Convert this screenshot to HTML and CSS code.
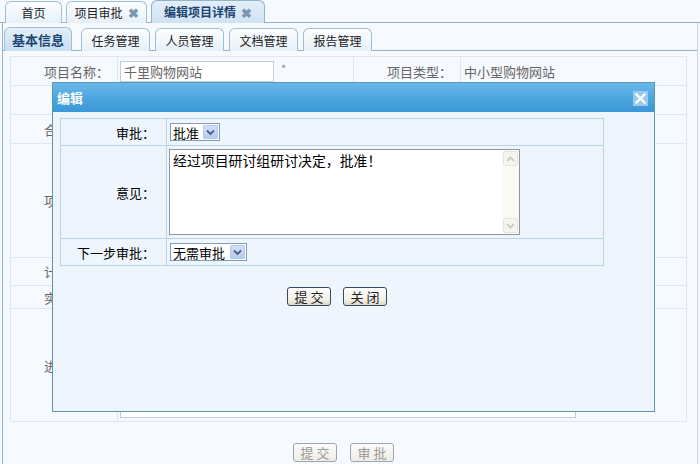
FILE: index.html
```html
<!DOCTYPE html>
<html lang="zh">
<head>
<meta charset="utf-8">
<title>编辑项目详情</title>
<link rel="stylesheet" href="styles.css">
</head>
<body>
<div class="page">
  <div class="tabs1">
    <div class="tab t-home">首页</div>
    <div class="tab t-audit">项目审批 <span class="x">✖</span></div>
    <div class="tab t-edit active">编辑项目详情 <span class="x">✖</span></div>
  </div>
  <div class="panel">
    <div class="tabs2">
      <div class="tab2 active">基本信息</div>
      <div class="tab2">任务管理</div>
      <div class="tab2">人员管理</div>
      <div class="tab2">文档管理</div>
      <div class="tab2">报告管理</div>
    </div>
    <div class="formwrap">
      <table class="form">
        <colgroup><col class="c1"><col class="c2"><col class="c3"><col class="c4"></colgroup>
        <tr class="r1">
          <td class="lbl">项目名称：</td>
          <td><span class="inp">千里购物网站</span><span class="star">*</span></td>
          <td class="lbl">项目类型：</td>
          <td class="val">中小型购物网站</td>
        </tr>
        <tr class="r2">
          <td class="lbl"></td><td></td><td class="lbl"></td><td></td>
        </tr>
        <tr class="r3">
          <td class="lbl">合同金额：</td><td></td><td class="lbl">项目状态：</td><td></td>
        </tr>
        <tr class="r4">
          <td class="lbl">项目描述：</td><td colspan="3"></td>
        </tr>
        <tr class="r5">
          <td class="lbl">计划时间：</td><td colspan="3"></td>
        </tr>
        <tr class="r6">
          <td class="lbl">实际时间：</td><td colspan="3"></td>
        </tr>
        <tr class="r7">
          <td class="lbl">进度说明：</td><td colspan="3" class="bottomcell"><div class="bigarea"></div></td>
        </tr>
      </table>
      <div class="actions">
        <span class="btn disabled">提 交</span>
        <span class="btn disabled">审 批</span>
      </div>
    </div>
  </div>

  <div class="dialog">
    <div class="dtitle">
      <span class="dname">编辑</span>
      <span class="dclose"><svg width="11" height="11" viewBox="0 0 11 11"><path d="M1.5 1.5 L9.5 9.5 M9.5 1.5 L1.5 9.5" stroke="#fff" stroke-width="2.4" stroke-linecap="square"/></svg></span>
    </div>
    <div class="dbody">
      <table class="dtable">
        <colgroup><col class="dc1"><col class="dc2"></colgroup>
        <tr class="dr1">
          <td class="dl">审批：</td>
          <td><span class="sel s1">批准<span class="arr"><svg width="9" height="7" viewBox="0 0 9 7"><path d="M1 1.5 L4.5 5 L8 1.5" fill="none" stroke="#4d6185" stroke-width="1.8"/></svg></span></span></td>
        </tr>
        <tr class="dr2">
          <td class="dl">意见：</td>
          <td>
            <div class="ta">
              <div class="tatext">经过项目研讨组研讨决定，批准！</div>
              <div class="sb">
                <span class="sbb"><svg width="9" height="6" viewBox="0 0 9 6"><path d="M1 5 L4.5 1.5 L8 5" fill="none" stroke="#c9c7ba" stroke-width="1.6"/></svg></span>
                <span class="sbb"><svg width="9" height="6" viewBox="0 0 9 6"><path d="M1 1 L4.5 4.5 L8 1" fill="none" stroke="#c9c7ba" stroke-width="1.6"/></svg></span>
              </div>
            </div>
          </td>
        </tr>
        <tr class="dr3">
          <td class="dl">下一步审批：</td>
          <td><span class="sel s2">无需审批<span class="arr"><svg width="9" height="7" viewBox="0 0 9 7"><path d="M1 1.5 L4.5 5 L8 1.5" fill="none" stroke="#4d6185" stroke-width="1.8"/></svg></span></span></td>
        </tr>
      </table>
      <div class="dactions">
        <span class="btn">提 交</span>
        <span class="btn">关 闭</span>
      </div>
    </div>
  </div>
</div>
</body>
</html>
```

FILE: styles.css
```css
* { box-sizing: border-box; }
html, body { margin: 0; padding: 0; }
body {
  width: 700px;
  height: 464px;
  overflow: hidden;
  background: #f6f9fd;
  font-family: "Noto Sans CJK SC", "Liberation Sans", sans-serif;
  font-size: 12px;
  color: #333;
}
.page { position: relative; width: 700px; height: 464px; }

/* top tabs */
.tabs1 {
  height: 23px;
  padding: 1px 0 0 5px;
  display: flex;
  gap: 4px;
  align-items: flex-end;
  border-bottom: 1px solid #8fb4cc;
}
.tab {
  height: 22px;
  margin-bottom: -1px;
  border: 1px solid #9fbfd4;
  border-bottom: none;
  border-radius: 6px 6px 0 0;
  background: linear-gradient(#fdfeff, #e6f0f8);
  display: flex;
  align-items: center;
  justify-content: center;
  color: #222;
  font-size: 12px;
  line-height: 1;
}
.t-home { width: 57px; }
.t-audit { width: 81px; }
.t-edit { width: 114px; }
.tab .x { color: #7d95ad; font-size: 13px; margin-left: 5px; font-weight: bold; }
.tab.active {
  background: linear-gradient(#e2eef8, #cfe3f3);
  color: #1d4472;
  font-weight: bold;
  height: 23px;
  border-color: #8fb4cc;
}

.panel {
  margin-left: 2px;
  width: 696px;
  height: 441px;
  border-left: 1px solid #8fb4cc;
  border-right: 1px solid #c6d9e6;
}

/* second tabs */
.tabs2 {
  height: 28px;
  padding: 4px 0 0 1px;
  display: flex;
  align-items: flex-end;
  border-bottom: 1px solid #8fb4cc;
}
.tab2 {
  width: 69px;
  height: 23px;
  margin-right: 5px;
  margin-bottom: -1px;
  border: 1px solid #9fbfd4;
  border-bottom: none;
  border-radius: 6px 6px 0 0;
  background: linear-gradient(#fdfeff, #e6f0f8);
  display: flex;
  align-items: center;
  justify-content: center;
  font-size: 12px;
  color: #222;
}
.tab2.active {
  width: 68px;
  margin-right: 9px;
  background: linear-gradient(#e3eff9, #c8def1);
  color: #1d4472;
  font-weight: bold;
  font-size: 13px;
  height: 24px;
}

/* form */
.formwrap { padding: 5px 0 0 7px; }
.form {
  border-collapse: collapse;
  width: 676px;
  border: 1px solid #d6e5ef;
  table-layout: fixed;
  font-size: 13px;
  color: #5a5a5a;
}
.form td { border: 1px solid #dde9f2; padding: 0; vertical-align: middle; }
.c1 { width: 107px; }
.c2 { width: 236px; }
.c3 { width: 107px; }
.c4 { width: 226px; }
.form .lbl { text-align: right; padding-right: 8px; color: #666; }
.form .val { padding-left: 3px; color: #666; }
.r1 { height: 29px; }
.r2 { height: 29px; }
.r3 { height: 29px; }
.r4 { height: 114px; }
.r5 { height: 28px; }
.r6 { height: 23px; }
.r7 { height: 113px; }
.inp {
  display: inline-block;
  width: 154px;
  height: 21px;
  line-height: 19px;
  margin-left: 2px;
  padding-left: 3px;
  border: 1px solid #c2cfd9;
  background: #fff;
  color: #666;
  vertical-align: middle;
}
.star { color: #888; font-size: 11px; margin-left: 7px; vertical-align: 3px; }
.form td.bottomcell { vertical-align: bottom; }
.bigarea {
  width: 456px;
  height: 60px;
  margin: 0 0 3px 2px;
  border: 1px solid #c8cdd2;
  border-top: none;
  background: #fff;
}
.actions {
  display: flex;
  justify-content: center;
  gap: 13px;
  padding: 21px 0 0 0;
  margin-left: -20px;
}
.btn {
  display: inline-flex;
  align-items: center;
  justify-content: center;
  width: 44px;
  height: 19px;
  border: 1px solid #2f4e64;
  border-radius: 3px;
  background: linear-gradient(#ffffff, #f1efe6 70%, #dcd8c8);
  color: #222;
  font-size: 13px;
  line-height: 1;
}
.btn.disabled { border-color: #9aa7b0; color: #9a9a9a; background: linear-gradient(#fbfbf8, #eeece4); }

/* dialog */
.dialog {
  position: absolute;
  left: 52px;
  top: 82px;
  width: 603px;
  height: 330px;
  border: 1px solid #5c97b2;
  background: #eef5fd;
}
.dtitle {
  height: 29px;
  background: linear-gradient(#6cb8e9, #4aa5de 55%, #3b98d7);
  display: flex;
  align-items: center;
  justify-content: space-between;
  padding: 0 6px 0 4px;
}
.dname { color: #fff; font-weight: bold; font-size: 13px; }
.dclose {
  width: 15px;
  height: 15px;
  background: #9cc9ee;
  display: flex;
  align-items: center;
  justify-content: center;
  margin-top: 1px;
}
.dbody { padding: 6px 0 0 7px; }
.dtable {
  border-collapse: collapse;
  width: 543px;
  table-layout: fixed;
  border: 1px solid #b7d6e6;
  font-size: 13px;
  color: #000;
}
.dtable td { border: 1px solid #b7d6e6; padding: 0; vertical-align: middle; }
.dc1 { width: 106px; }
.dc2 { width: 437px; }
.dl { text-align: right; padding-right: 11px !important; }
.dr1 { height: 27px; }
.dr2 { height: 93px; }
.dr3 { height: 27px; }
.sel {
  display: inline-flex;
  align-items: center;
  height: 18px;
  margin-left: 3px;
  padding-left: 2px;
  border: 1px solid #7f9db9;
  background: #fff;
  font-size: 13px;
  line-height: 1;
  gap: 2px;
}
.s1 { width: 50px; }
.s2 { width: 77px; }
.arr {
  margin-left: auto;
  width: 15px;
  height: 14px;
  margin-right: 1px;
  background: linear-gradient(#d4e0fb, #b5c9f3);
  border: 1px solid #b7c8ee;
  border-radius: 1px;
  display: flex;
  align-items: center;
  justify-content: center;
}
.ta {
  margin: 3px 0 3px 2px;
  width: 351px;
  height: 86px;
  border: 1px solid #8d98a0;
  background: #fff;
  display: flex;
}
.tatext { flex: 1; padding: 2px 3px; font-size: 13.9px; line-height: 1.2; }
.sb {
  width: 17px;
  background: #fbfbf6;
  display: flex;
  flex-direction: column;
  justify-content: space-between;
  padding: 1px 1px;
}
.sbb {
  width: 15px;
  height: 15px;
  border: 1px solid #e6e4da;
  border-radius: 2px;
  background: #f5f4ee;
  display: flex;
  align-items: center;
  justify-content: center;
}
.dactions {
  display: flex;
  gap: 12px;
  padding: 21px 0 0 227px;
}
```
